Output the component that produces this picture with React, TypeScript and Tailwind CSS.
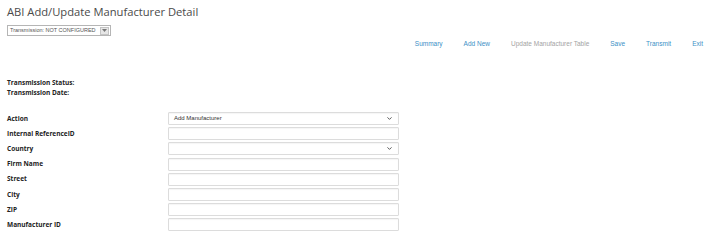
import { ChevronDown } from "lucide-react"

const fields = [
  { label: "Action", kind: "select", value: "Add Manufacturer" },
  { label: "Internal ReferenceID", kind: "input" },
  { label: "Country", kind: "select", value: "" },
  { label: "Firm Name", kind: "input" },
  { label: "Street", kind: "input" },
  { label: "City", kind: "input" },
  { label: "ZIP", kind: "input" },
  { label: "Manufacturer ID", kind: "input" },
]

const links = [
  { text: "Summary", active: true },
  { text: "Add New", active: true },
  { text: "Update Manufacturer Table", active: false },
  { text: "Save", active: true },
  { text: "Transmit", active: true },
  { text: "Exit", active: true },
]

function App() {
  return (
    <div className="w-[710px] h-[246px] bg-white overflow-hidden px-[7px] pt-[2px] font-['Open_Sans',sans-serif]">
      <h1 className="text-[11.2px] leading-[20px] text-[#4a4a4a] font-normal">ABI Add/Update Manufacturer Detail</h1>

      <div className="mt-[3px] flex items-center w-[104px] h-[11px] border border-[#b5b5b5] bg-white">
        <span className="flex-1 pl-[2px] text-[5.5px] leading-none text-[#555] font-['Liberation_Sans',sans-serif] whitespace-nowrap">
          Transmission: NOT CONFIGURED
        </span>
        <span className="w-[9px] h-[8px] mr-[1px] flex items-center justify-center bg-[#e6e6e6] border border-[#c4c4c4]">
          <svg width="5" height="3" viewBox="0 0 5 3">
            <path d="M0 0 L2.5 3 L5 0 Z" fill="#777" />
          </svg>
        </span>
      </div>

      <nav className="flex justify-end gap-[21px] mt-[2px] h-[12px] items-center font-['Liberation_Sans',sans-serif] text-[6.5px]">
        {links.map((l) => (
          <span key={l.text} className={l.active ? "text-[#3d8fc6]" : "text-[#a3a3a3]"}>
            {l.text}
          </span>
        ))}
      </nav>

      <div className="mt-[29px] flex flex-col gap-[2px] text-[6.5px] font-bold text-[#222] leading-[8px]">
        <div>Transmission Status:</div>
        <div>Transmission Date:</div>
      </div>

      <div className="mt-[15px] flex flex-col gap-[2.2px]">
        {fields.map((f) => (
          <div key={f.label} className="flex items-center h-[13px]">
            <label className="w-[161px] text-[6.5px] font-bold text-[#222]">{f.label}</label>
            <div className="w-[231px] h-[13px] border border-[#dcdcdc] rounded-[1px] shadow-[inset_0_1px_1px_rgba(0,0,0,0.04)] flex items-center px-[5px]">
              {f.kind === "select" && (
                <>
                  <span className="flex-1 text-[6px] text-[#333] font-['Liberation_Sans',sans-serif]">{f.value}</span>
                  <ChevronDown className="w-[7px] h-[7px] text-[#444]" strokeWidth={3} />
                </>
              )}
            </div>
          </div>
        ))}
      </div>
    </div>
  )
}

export default App
